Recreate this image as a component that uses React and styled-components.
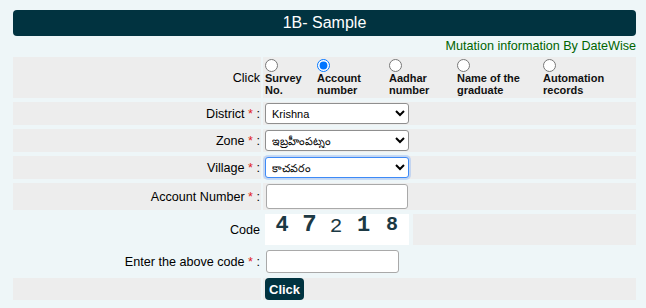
import React from 'react';
import styled, { createGlobalStyle } from 'styled-components';

const Global = createGlobalStyle`
  html, body { margin: 0; padding: 0; background: #eef6f8; }
  body { font-family: "Liberation Sans", Arial, sans-serif; color: #000; }
`;

const Page = styled.div`
  width: 646px;
  box-sizing: border-box;
  padding: 10px 10px 0 13px;
`;

const TitleBar = styled.div`
  height: 26px;
  background: #013340;
  border-radius: 4px;
  color: #fff;
  font-size: 16px;
  line-height: 26px;
  text-align: center;
`;

const SubLink = styled.div`
  text-align: right;
  color: #006400;
  font-size: 12.6px;
  line-height: 15px;
  padding: 3px 0 3px;
`;

const Form = styled.div`
  display: grid;
  grid-template-columns: 250px 150px 1fr;
  row-gap: 4px;
`;

const Label = styled.div`
  margin-right: 2px;
  background: ${p => (p.$plain ? 'transparent' : '#ededed')};
  display: flex;
  align-items: center;
  justify-content: flex-end;
  font-size: 12.6px;
  padding-right: 1px;
  white-space: pre;
`;

const Star = styled.span`
  color: #e02020;
`;

const Cell = styled.div`
  background: ${p => (p.$plain ? 'transparent' : '#ededed')};
  grid-column: span ${p => p.$span || 1};
  display: flex;
  align-items: center;
  padding: ${p => p.$pad || '1px 2px'};
`;

const RadioGroup = styled.div`
  display: flex;
`;

const Option = styled.label`
  width: ${p => p.$w}px;
  display: flex;
  flex-direction: column;
  align-items: flex-start;
  font-size: 11px;
  font-weight: bold;
  line-height: 12px;
  color: #111;
`;

const Radio = styled.input`
  width: 13px;
  height: 13px;
  margin: 0;
`;

const Select = styled.select`
  width: 144px;
  height: 21px;
  box-sizing: border-box;
  font-family: "Liberation Sans", Arial, sans-serif;
  font-size: 11px;
  color: #000;
  background: #fff;
  border: 1px solid ${p => (p.$focus ? '#3d8af7' : '#8f8f8f')};
  border-radius: 3px;
  padding: 0 2px;
  box-shadow: ${p => (p.$focus ? '0 0 0 2px rgba(120,170,245,0.35)' : 'none')};
  outline: none;
`;

const TextInput = styled.input`
  width: ${p => p.$w}px;
  height: ${p => p.$h}px;
  box-sizing: border-box;
  margin: 0 0 0 1px;
  border: 1px solid #a9a9a9;
  border-radius: 3px;
  background: #fff;
  font-size: 12px;
  padding: 0 3px;
`;

const Captcha = styled.div`
  width: 144px;
  height: 31px;
  background: #fff;
  display: flex;
  align-items: flex-end;
  padding-left: 3px;
  box-sizing: border-box;
`;

const Digit = styled.span`
  width: ${p => p.$w}px;
  text-align: center;
  font-family: "Liberation Mono", "Courier New", monospace;
  font-size: ${p => p.$size}px;
  font-weight: ${p => p.$weight};
  color: #1c3944;
  line-height: 1;
  transform: translateY(${p => p.$dy}px);
`;

const SubmitButton = styled.button`
  height: 22px;
  margin: 0;
  padding: 0 4px;
  border: none;
  border-radius: 4px;
  background: #013340;
  color: #fff;
  font-family: "Liberation Sans", Arial, sans-serif;
  font-size: 13px;
  font-weight: bold;
`;

const options = [
  { w: 52, a: 'Survey', b: 'No.' },
  { w: 72, a: 'Account', b: 'number', checked: true },
  { w: 68, a: 'Aadhar', b: 'number' },
  { w: 86, a: 'Name of the', b: 'graduate' },
  { w: 90, a: 'Automation', b: 'records' },
];

const digits = [
  { c: '4', w: 28, size: 22, weight: 700, dy: -8 },
  { c: '7', w: 27, size: 24, weight: 700, dy: -8 },
  { c: '2', w: 26, size: 21, weight: 400, dy: -8 },
  { c: '1', w: 29, size: 22, weight: 700, dy: -8 },
  { c: '8', w: 28, size: 20, weight: 700, dy: -10 },
];

function Req({ children }) {
  return (
    <>
      {children} <Star>*</Star> :
    </>
  );
}

export default function App() {
  return (
    <>
      <Global />
      <Page>
        <TitleBar>1B- Sample</TitleBar>
        <SubLink>Mutation information By DateWise</SubLink>
        <Form>
          <Label>Click</Label>
          <Cell $span={2} $pad="2px 2px">
            <RadioGroup>
              {options.map(o => (
                <Option key={o.a} $w={o.w}>
                  <Radio type="radio" name="mode" defaultChecked={!!o.checked} />
                  <span>{o.a}</span>
                  <span>{o.b}</span>
                </Option>
              ))}
            </RadioGroup>
          </Cell>

          <Label><Req>District</Req></Label>
          <Cell>
            <Select defaultValue="Krishna">
              <option>Krishna</option>
            </Select>
          </Cell>
          <Cell />

          <Label><Req>Zone</Req></Label>
          <Cell>
            <Select defaultValue="ఇబ్రహీంపట్నం">
              <option>ఇబ్రహీంపట్నం</option>
            </Select>
          </Cell>
          <Cell />

          <Label><Req>Village</Req></Label>
          <Cell>
            <Select $focus defaultValue="కాచవరం">
              <option>కాచవరం</option>
            </Select>
          </Cell>
          <Cell />

          <Label><Req>Account Number</Req></Label>
          <Cell>
            <TextInput $w={142} $h={25} />
          </Cell>
          <Cell />

          <Label $plain>Code</Label>
          <Cell $plain $pad="0 2px">
            <Captcha>
              {digits.map(d => (
                <Digit key={d.c} $w={d.w} $size={d.size} $weight={d.weight} $dy={d.dy}>
                  {d.c}
                </Digit>
              ))}
            </Captcha>
          </Cell>
          <Cell />

          <Label $plain><Req>Enter the above code</Req></Label>
          <Cell $plain>
            <TextInput $w={133} $h={23} />
          </Cell>
          <Cell $plain />

          <Label />
          <Cell $pad="0 2px">
            <SubmitButton>Click</SubmitButton>
          </Cell>
          <Cell />
        </Form>
      </Page>
    </>
  );
}
